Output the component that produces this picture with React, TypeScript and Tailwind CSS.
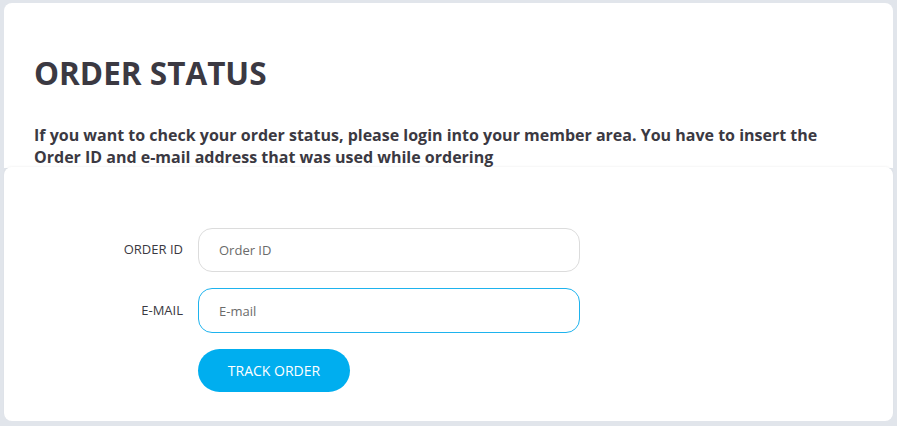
export default function App() {
  return (
    <div className="min-h-[426px] bg-[#e1e5eb] px-[4px] pt-[3px] pb-[5px] font-['Open_Sans',sans-serif] text-[#3b3942]">
      <div className="rounded-t-[8px] bg-white px-[30px] pt-[48px]">
        <h1 className="text-[31.5px] font-bold leading-[44px]">ORDER STATUS</h1>
        <p className="mt-[29px] text-[16px] font-bold leading-[22px]">
          If you want to check your order status, please login into your member area. You have to insert the Order ID and
          e-mail address that was used while ordering
        </p>
      </div>
      <div className="-mt-px rounded-[8px] bg-white pt-[61px] pb-[29px] shadow-[0_-1px_2px_rgba(0,0,0,0.04)]">
        <div className="flex flex-col gap-[16px]">
          <div className="flex items-center gap-[15px]">
            <label className="w-[179px] text-right text-[13px]">ORDER ID</label>
            <input
              placeholder="Order ID"
              className="h-[44px] w-[382px] rounded-[14px] border border-[#dcdcdc] px-[20px] text-[13px] outline-none placeholder:text-[#6b6b6b]"
            />
          </div>
          <div className="flex items-center gap-[15px]">
            <label className="w-[179px] text-right text-[13px]">E-MAIL</label>
            <input
              autoFocus
              placeholder="E-mail"
              className="h-[45px] w-[382px] rounded-[14px] border border-[#1eb3ee] px-[20px] text-[13px] caret-black outline-none placeholder:text-[#6b6b6b]"
            />
          </div>
          <div className="flex gap-[15px]">
            <div className="w-[179px]" />
            <button className="h-[43px] w-[152px] rounded-full bg-[#00aeef] text-[14px] text-white">TRACK ORDER</button>
          </div>
        </div>
      </div>
    </div>
  );
}
